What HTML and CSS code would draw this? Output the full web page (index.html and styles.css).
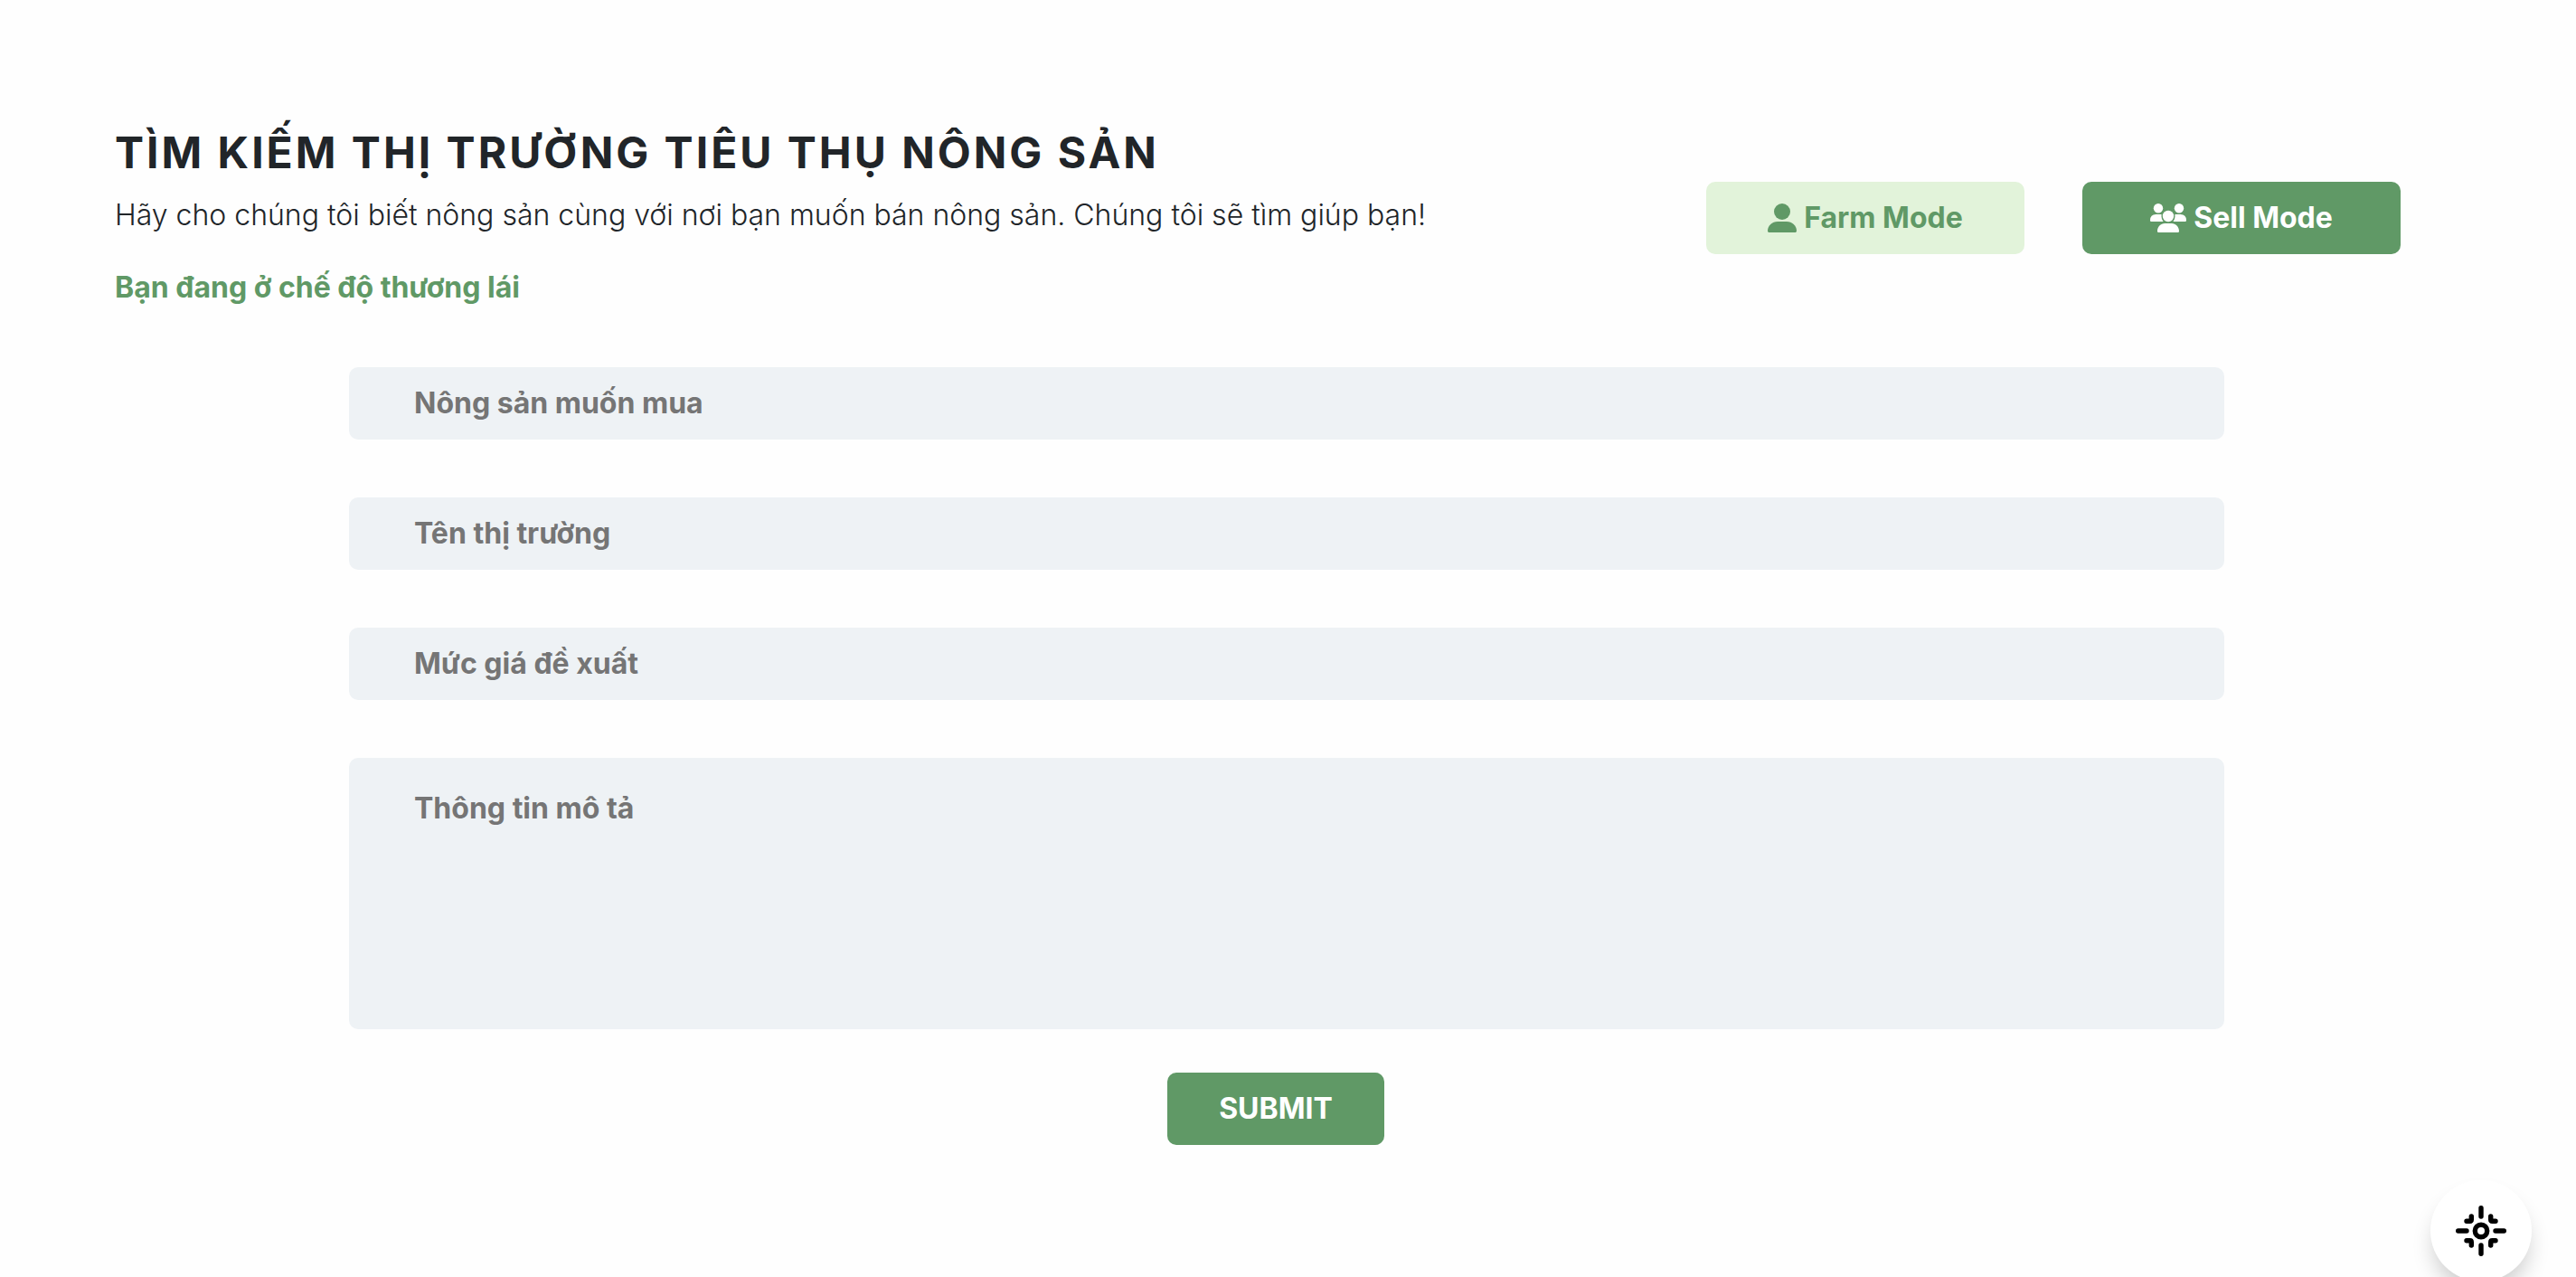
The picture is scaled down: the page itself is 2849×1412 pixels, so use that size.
FILE: index.html
```html
<!DOCTYPE html>
<html lang="vi">
<head>
<meta charset="utf-8">
<meta name="viewport" content="width=device-width, initial-scale=1">
<title>Tìm kiếm thị trường tiêu thụ nông sản</title>
<link rel="stylesheet" href="styles.css">
</head>
<body>
<main class="page">
  <header class="intro">
    <div class="intro-text">
      <h1 class="title">TÌM KIẾM THỊ TRƯỜNG TIÊU THỤ NÔNG SẢN</h1>
      <p class="lead">Hãy cho chúng tôi biết nông sản cùng với nơi bạn muốn bán nông sản. Chúng tôi sẽ tìm giúp bạn!</p>
      <p class="mode-note">Bạn đang ở chế độ thương lái</p>
    </div>
    <div class="modes">
      <button type="button" class="btn btn-mode btn-light">
        <svg class="icon-user" viewBox="0 0 32 32" aria-hidden="true"><circle cx="16" cy="9" r="9"/><path d="M11 20h10c6 0 11 4.500 11 10.200 0 1-.8 1.800-1.800 1.800H1.800C.8 32 0 31.200 0 30.200 0 24.500 5 20 11 20z"/></svg>
        <span>Farm Mode</span>
      </button>
      <button type="button" class="btn btn-mode">
        <svg class="icon-group" viewBox="0 0 40 32" aria-hidden="true"><circle cx="9" cy="5.200" r="5.200"/><circle cx="32" cy="5.200" r="5.200"/><circle cx="20" cy="14" r="6.200"/><path d="M6.500 12h5q.6 0 1.200.2-.9 4.200 1.800 7.800H1.300Q0 20 0 18.700 0 12 6.500 12zM28.500 12h5q6.500 0 6.500 6.700 0 1.300-1.300 1.300H25.500q2.700-3.600 1.800-7.800.6-.2 1.200-.2zM16.200 22h7.600c4.500 0 8.200 3.800 8.200 8.400 0 .9-.7 1.600-1.600 1.600H9.600C8.700 32 8 31.300 8 30.400 8 25.800 11.700 22 16.200 22z"/></svg>
        <span>Sell Mode</span>
      </button>
    </div>
  </header>
  <form class="form">
    <input class="field" type="text" placeholder="Nông sản muốn mua" aria-label="Nông sản muốn mua">
    <input class="field" type="text" placeholder="Tên thị trường" aria-label="Tên thị trường">
    <input class="field" type="text" placeholder="Mức giá đề xuất" aria-label="Mức giá đề xuất">
    <textarea class="field field-area" placeholder="Thông tin mô tả" aria-label="Thông tin mô tả"></textarea>
    <button type="submit" class="btn btn-submit">SUBMIT</button>
  </form>
</main>
<button type="button" class="fab" aria-label="Menu">
  <svg viewBox="0 0 56 56" aria-hidden="true"><circle cx="28" cy="28" r="6.700"/><path d="M28 2.700v9.300M28 44v9.300M2.700 28H12M44 28h9.300M17.300 12v3.600q0 1.700-1.700 1.700H12M38.700 12v3.600q0 1.700 1.700 1.700H44M17.300 44v-3.600q0-1.700-1.700-1.700H12M38.700 44v-3.600q0-1.700 1.700-1.700H44"/></svg>
</button>
<div class="scroll-track" aria-hidden="true"></div>
</body>
</html>
```
FILE: styles.css
```css
* {
  box-sizing: border-box;
}

body {
  margin: 0;
  background: #fefefe;
  color: #212529;
  font-family: Inter, "Liberation Sans", sans-serif;
  font-size: 32px;
  line-height: 48px;
}

.page {
  padding: 140px 194px 144px 127px;
}

.intro {
  display: flex;
  align-items: center;
  justify-content: space-between;
  gap: 64px;
}

.title {
  margin: 0 0 16px;
  font-size: 48px;
  line-height: 58px;
  font-weight: 700;
  letter-spacing: 3px;
}

.lead {
  margin: 0 0 32px;
  font-weight: 300;
}

.mode-note {
  margin: 0;
  color: #609966;
  font-weight: 700;
}

.modes {
  display: flex;
  gap: 64px;
}

.btn {
  display: inline-flex;
  align-items: center;
  justify-content: center;
  gap: 8px;
  height: 80px;
  padding: 0;
  border: 0;
  border-radius: 10px;
  background: #609966;
  color: #fff;
  font: inherit;
  font-weight: 700;
  cursor: pointer;
}

.btn-mode {
  width: 352px;
}

.btn-light {
  background: #e2f3da;
  color: #609966;
}

.btn svg {
  height: 32px;
  fill: currentColor;
}

.icon-user {
  width: 32px;
}

.icon-group {
  width: 40px;
}

.form {
  display: flex;
  flex-direction: column;
  gap: 64px;
  margin: 64px 195px 0 259px;
}

.field {
  display: block;
  width: 100%;
  height: 80px;
  padding: 0 72px 2px;
  border: 0;
  border-radius: 10px;
  background: #eef2f5;
  color: #212529;
  font: inherit;
  font-weight: 700;
}

.field::placeholder {
  color: #757575;
  opacity: 1;
}

.field-area {
  height: 300px;
  padding-top: 32px;
  resize: none;
}

.btn-submit {
  align-self: center;
  width: 240px;
  margin: -16px 24px 0 0;
}

.fab {
  position: fixed;
  right: 49px;
  bottom: -5px;
  display: flex;
  align-items: center;
  justify-content: center;
  width: 112px;
  height: 112px;
  padding: 0;
  border: 0;
  border-radius: 50%;
  background: #fff;
  box-shadow: 0 16px 24px -4px rgba(0, 0, 0, 0.2);
  cursor: pointer;
}

.fab svg {
  width: 56px;
  height: 56px;
  fill: none;
  stroke: #000;
  stroke-width: 5.400;
  stroke-linecap: round;
}

.scroll-track {
  position: fixed;
  top: 0;
  right: 0;
  bottom: 0;
  width: 3px;
  padding: 69px 0 47vh 2px;
  background: #c1c1c1 content-box, #f1f1f1;
}
```
